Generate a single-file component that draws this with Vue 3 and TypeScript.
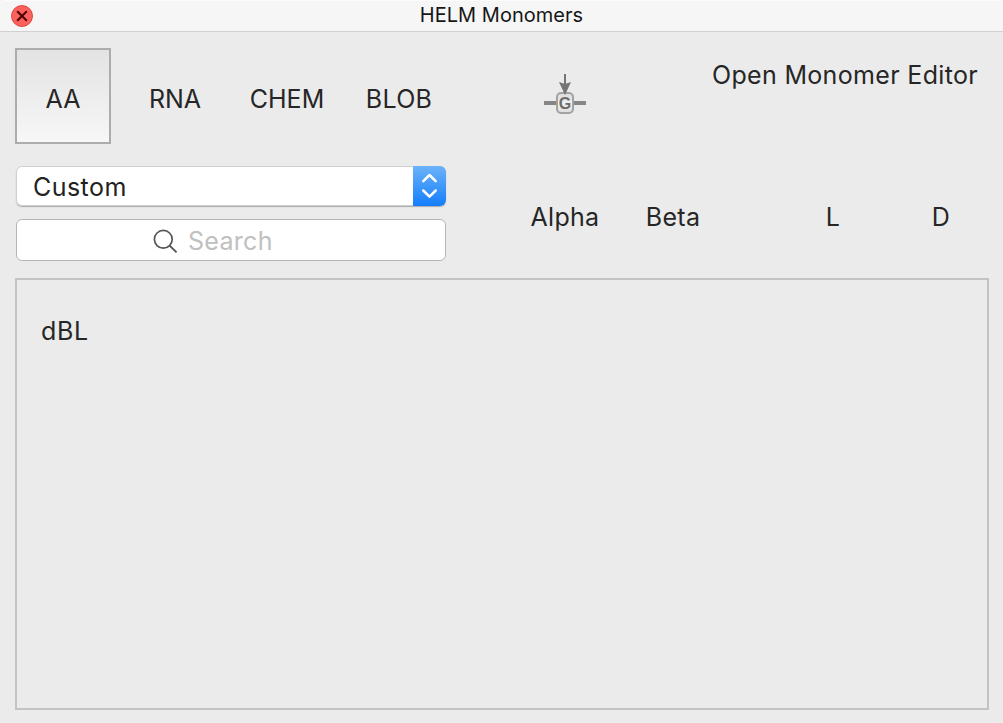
<script setup lang="ts">
import { ref } from 'vue'

interface Tab { id: string; cls: string }

const tabs: Tab[] = [
  { id: 'AA', cls: 'aa' },
  { id: 'RNA', cls: 'rna' },
  { id: 'CHEM', cls: 'chem' },
  { id: 'BLOB', cls: 'blob' },
]
const active = ref('AA')
const filters = ['Alpha', 'Beta', 'L', 'D']
const monomers = ['dBL']
</script>

<template>
  <div class="window">
    <header class="titlebar">
      <button class="close" aria-label="Close">
        <svg width="22" height="22" viewBox="0 0 22 22">
          <circle cx="11" cy="11" r="10.5" fill="#fc605c" stroke="#e2463f" />
          <path d="M6.2 6.2 15.8 15.8M15.8 6.2 6.2 15.8" stroke="#4d0000" stroke-width="2" />
        </svg>
      </button>
      <span class="title">HELM Monomers</span>
    </header>

    <main class="body">
      <div class="toolbar">
        <nav class="tabs">
          <button
            v-for="t in tabs"
            :key="t.id"
            class="tab"
            :class="[t.cls, { active: t.id === active }]"
            @click="active = t.id"
          >{{ t.id }}</button>
        </nav>
        <svg class="insert" width="42" height="42" viewBox="0 0 42 42">
          <defs>
            <linearGradient id="chip" x1="0" y1="0" x2="0" y2="1">
              <stop offset="0" stop-color="#dadada" />
              <stop offset=".5" stop-color="#f0f0f0" />
              <stop offset="1" stop-color="#dedede" />
            </linearGradient>
          </defs>
          <path d="M0 29H13M29 29H42" stroke="#868686" stroke-width="4" />
          <rect x="13" y="19" width="16" height="20" rx="4" fill="url(#chip)" stroke="#a2a2a2" stroke-width="2" />
          <text x="21" y="35" text-anchor="middle" class="glyph">G</text>
          <path d="M21 0V12" stroke="#757575" stroke-width="2" />
          <path d="M15 8 21 10 27 8 21 21Z" fill="#757575" />
        </svg>
        <button class="open">Open Monomer Editor</button>
      </div>

      <div class="controls">
        <div class="fields">
          <div class="select">
            <span class="value">Custom</span>
            <span class="stepper">
              <svg width="33" height="40" viewBox="0 0 33 40" fill="none" stroke="#fff" stroke-width="2.5" stroke-linecap="round" stroke-linejoin="round">
                <path d="M10.3 15.2 16.5 9 22.7 15.2M10.3 24.5 16.5 30.7 22.7 24.5" />
              </svg>
            </span>
          </div>
          <div class="search">
            <svg width="25" height="25" viewBox="0 0 25 25" fill="none" stroke="#565656">
              <circle cx="10.3" cy="10.3" r="8.9" stroke-width="1.7" />
              <path d="M16.6 16.6 23.6 23.4" stroke-width="2" />
            </svg>
            <span class="hint">Search</span>
          </div>
        </div>
        <div class="filters">
          <button v-for="f in filters" :key="f" class="filter" :class="'f-' + f.toLowerCase()">{{ f }}</button>
        </div>
      </div>

      <section class="list">
        <div v-for="m in monomers" :key="m" class="monomer">{{ m }}</div>
      </section>
    </main>
  </div>
</template>

<style>
html, body { margin: 0; background: #ebebeb; }
</style>

<style scoped>
.window {
  box-sizing: border-box;
  width: 1003px;
  height: 723px;
  display: flex;
  flex-direction: column;
  overflow: hidden;
  background: #ebebeb;
  color: #262626;
  font: 25px/30px Inter, "Liberation Sans", sans-serif;
  white-space: nowrap;
}
button {
  padding: 0;
  border: 0;
  background: none;
  color: inherit;
  font: inherit;
  letter-spacing: inherit;
}
.titlebar {
  box-sizing: border-box;
  height: 32px;
  flex: none;
  display: grid;
  grid-template-columns: 44px 1fr 44px;
  background: #f6f6f6;
  border-bottom: 1px solid #d0d0d0;
  border-top-left-radius: 3px;
  box-shadow: inset 0 1px #fbfbfb;
}
.close { width: 22px; height: 22px; margin: 5px 0 0 11px; }
.close svg, .stepper svg { display: block; }
.title {
  justify-self: center;
  color: #161616;
  font-size: 20px;
  line-height: 30px;
  letter-spacing: 0.03px;
}
.body {
  flex: 1;
  display: flex;
  flex-direction: column;
  padding: 16px 14px 13px 15px;
}
.toolbar { display: flex; height: 96px; }
.tabs { display: flex; width: 529px; }
.tab { box-sizing: border-box; height: 96px; padding-top: 6px; }
.aa { width: 96px; }
.rna { width: 128px; }
.chem { width: 96px; }
.blob { width: 128px; letter-spacing: 0.25px; }
.tab.active {
  padding-top: 6px;
  border: 2px solid #acacac;
  background: linear-gradient(#e3e3e3, #f7f7f7);
}
.insert { margin-top: 26px; flex: none; }
.glyph { font: bold 16px "Liberation Sans", sans-serif; fill: #6c6c6c; }
.open { height: 30px; margin: 12px 11px 0 auto; letter-spacing: 0.33px; }
.controls { display: flex; margin-top: 22px; height: 95px; }
.fields { flex: none; width: 430px; margin-left: 1px; }
.select {
  box-sizing: border-box;
  display: flex;
  justify-content: space-between;
  height: 40px;
  border-radius: 6px;
  overflow: hidden;
  background: #fff;
  box-shadow: 0 1px 1px #aaa, inset 0 0 0 1px #cfcfcf;
}
.value { padding-left: 17px; line-height: 42px; letter-spacing: 0.45px; color: #222; }
.stepper { width: 33px; background: linear-gradient(#6cb3fa, #147efb); }
.search {
  box-sizing: border-box;
  display: flex;
  height: 42px;
  margin-top: 13px;
  padding-left: 136px;
  border: 1px solid #b6b6b6;
  border-radius: 6px;
  background: #fff;
}
.search svg { margin-top: 9px; }
.hint { margin-left: 10px; line-height: 42px; letter-spacing: 0.3px; color: #c0c0c0; }
.filters { display: flex; flex: none; margin-left: 65px; padding-top: 36px; }
.filter { width: 108px; height: 30px; text-align: center; letter-spacing: 0.3px; }
.f-l { margin-left: 52px; }
.list {
  box-sizing: border-box;
  flex: 1;
  margin-top: 17px;
  padding: 36px 24px;
  border: 2px solid #c3c3c3;
}
.monomer { letter-spacing: 0.7px; }
</style>
